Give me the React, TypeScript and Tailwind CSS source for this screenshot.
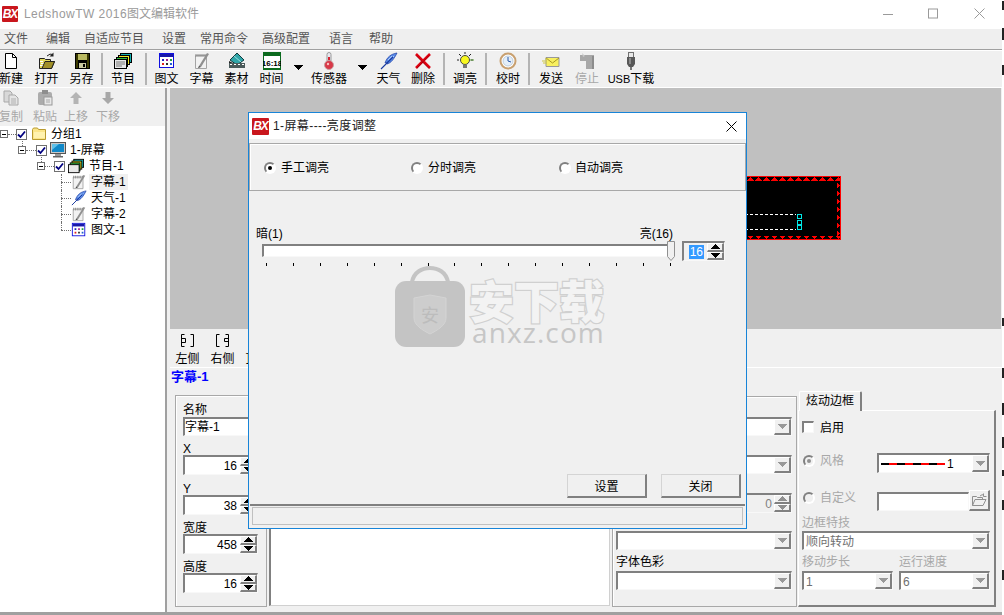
import React from "react";

const sunken = "border-t-2 border-l-2 border-b border-r border-t-[#808080] border-l-[#808080] border-b-[#f8f8f8] border-r-[#f8f8f8]";
const bevel = "bg-[#f0f0f0] border-t border-l border-b-2 border-r-2 border-t-white border-l-white border-b-[#808080] border-r-[#808080]";
const label = "h-[14px] leading-[16px]";

function Logo({ className }: { className: string }) {
  return (
    <div className={"bg-[#c9161d] text-white font-bold italic flex items-center justify-center overflow-hidden rounded-[1px] text-[12px] tracking-[-1px] " + className}>BX</div>
  );
}

function Tri({ up, color = "#000" }: { up?: boolean; color?: string }) {
  return (
    <svg width="9" height="5" viewBox="0 0 9 5" shapeRendering="crispEdges">
      <path d={up ? "M4.5 0 9 5H0z" : "M0 0h9L4.5 5z"} fill={color} />
    </svg>
  );
}

function Spin({ disabled }: { disabled?: boolean }) {
  const c = disabled ? "#909090" : "#000";
  return (
    <div className="w-[17px] h-full flex flex-col shrink-0">
      <div className={bevel + " flex-1 flex items-center justify-center"}><Tri up color={c} /></div>
      <div className={bevel + " flex-1 flex items-center justify-center"}><Tri color={c} /></div>
    </div>
  );
}

function NumBox({ value }: { value: string }) {
  return (
    <div className={sunken + " bg-white h-[20px] w-[75px] flex items-stretch"}>
      <div className="flex-1 text-right pr-[3px] leading-[18px]">{value}</div>
      <Spin />
    </div>
  );
}

function Combo({ text, className = "", gray }: { text?: React.ReactNode; className?: string; gray?: boolean }) {
  return (
    <div className={sunken + " bg-white flex items-stretch h-[19px] " + className}>
      <div className={"flex-1 pl-[2px] leading-[18px] overflow-hidden " + (gray ? "text-[#707070]" : "")}>{text}</div>
      <div className={bevel + " w-[17px] flex items-center justify-center"}><Tri color="#999999" /></div>
    </div>
  );
}

function Radio({ checked, disabled }: { checked?: boolean; disabled?: boolean }) {
  return (
    <div className={"w-[12px] h-[12px] rounded-full border-2 border-t-[#808080] border-l-[#808080] border-b-white border-r-white flex items-center justify-center shrink-0 " + (disabled ? "bg-[#f0f0f0]" : "bg-white")}>
      {checked && <div className={"w-[4px] h-[4px] rounded-full " + (disabled ? "bg-[#909090]" : "bg-black")} />}
    </div>
  );
}

/* ---------- toolbar icons ---------- */
const S = ({ children }: { children: React.ReactNode }) => (
  <svg width="18" height="18" viewBox="0 0 18 18">{children}</svg>
);
const INew = () => <S><path d="M3.5 1.5h7l4 4v11h-11z" fill="#fff" stroke="#000" /><path d="M10.5 1.5v4h4" fill="none" stroke="#000" /></S>;
const IOpen = () => <S><path d="M1.5 6.5h5l1 1h5v2h4l-3 7H1.5z" fill="#e4dc60" stroke="#222" /><path d="M2 9h3v1H2zm1 2h3v1H3zM2 13h3v1H2z" fill="#fff" /><path d="M4 16.5l3-7h9.5l-3 7z" fill="#a09028" stroke="#222" /><path d="M9 4q3-3 6-1.500" fill="none" stroke="#222" /><path d="M15.500 0.500v4h-4z" fill="#222" /></S>;
const ISave = () => <S><rect x="2" y="1" width="15" height="16" fill="#000" /><rect x="5" y="2" width="9" height="6" fill="#b8b860" /><rect x="3" y="2" width="2" height="14" fill="#3a3a00" /><rect x="14" y="2" width="2" height="14" fill="#3a3a00" /><rect x="6" y="11" width="7" height="5" fill="#c8c8a0" /><rect x="10" y="12" width="2" height="3" fill="#000" /></S>;
const IProg = () => <S><rect x="6.500" y="1.500" width="11" height="9" fill="#18b0b0" stroke="#000" /><rect x="4.500" y="3.500" width="11" height="9" fill="#f0e820" stroke="#000" /><rect x="2.500" y="5.500" width="11" height="9" fill="#30c040" stroke="#000" /><rect x="0.500" y="7.500" width="12" height="9" fill="#e8e8e8" stroke="#000" /><path d="M2 10h9M2 12h9M2 14h6" stroke="#777" /></S>;
const IPic = () => <S><rect x="1.500" y="1.500" width="14" height="14" fill="#fff" stroke="#1010e0" /><rect x="2" y="2" width="13" height="3" fill="#1818a8" /><path d="M4 7h2v2H4z" fill="#2020c0" /><path d="M8 7h2v2H8z" fill="#a02090" /><path d="M12 7h2v2h-2z" fill="#20a040" /><path d="M4 11h2v2H4z" fill="#e02020" /><path d="M8 11h2v2H8z" fill="#303030" /><path d="M12 11h2v2h-2z" fill="#2060d0" /></S>;
const INote = () => <S><path d="M2.500 3.500h11v13h-11z" fill="#f2f2f2" stroke="#a4a4a4" /><path d="M3 2v3M5 2v3M7 2v3M9 2v3M11 2v3M13 2v3" stroke="#888" /><path d="M6 14L14 1l2 1-8 13z" fill="#909090" /><path d="M6 14l2 1-3 1z" fill="#333" /></S>;
const IMat = () => <S><path d="M9 1l7 7-7 5-7-5z" fill="#2fa5a8" stroke="#10393c" /><path d="M6 4l7 6" stroke="#9ce0e0" /><path d="M1 11h16v5H1z" fill="#4b5a5a" /><path d="M2 12h2v1H2zm4 0h2v1H6zm4 0h2v1h-2zm4 0h2v1h-2z" fill="#fff" /><path d="M1 9l4 2H1z" fill="#222" /></S>;
const ITime = () => <S><rect x="0" y="0" width="18" height="18" fill="#0b6a1e" /><rect x="1" y="4" width="16" height="12" fill="#fff" /><text x="9" y="13.500" textAnchor="middle" fontSize="8" fontWeight="700" fontFamily="Liberation Sans" fill="#000">16:18</text></S>;
const ITherm = () => <S><rect x="7" y="0.500" width="4" height="10" rx="2" fill="#e8e8f0" stroke="#999" /><rect x="8" y="5" width="2" height="6" fill="#d82030" /><circle cx="9" cy="13" r="4.500" fill="#d83848" stroke="#c8a0a0" /><circle cx="8" cy="12" r="1.200" fill="#f8c0c0" /></S>;
const IFeather = () => <S><path d="M17 1C11 2 7 5 5 11l3-1-1 2c4-1 7-5 10-11z" fill="#5a8ce8" stroke="#1a3aa0" strokeWidth="0.700" /><path d="M12 4l-4 4M14 4l-3 3" stroke="#d8e8ff" strokeWidth="0.700" /><path d="M13 5L1 17" stroke="#1a3aa0" strokeWidth="1.100" /></S>;
const IDel = () => <S><path d="M2 2l14 14M16 2L2 16" stroke="#e00010" strokeWidth="2.600" /><path d="M2 3.500l13 13M15 3.500L3 16" stroke="#700008" strokeWidth="0.500" /></S>;
const IBulb = () => <S><circle cx="9" cy="8" r="4.500" fill="#f8f820" stroke="#444" /><rect x="7" y="12.500" width="4" height="3.500" fill="#777" /><path d="M9 0v2M1 8h2M15 8h2M3 2l2 2M15 2l-2 2" stroke="#222" /><path d="M14 8h4" stroke="#60a040" /></S>;
const IClock = () => <S><circle cx="9" cy="9" r="7.500" fill="#fff" stroke="#c8a070" strokeWidth="2" /><circle cx="9" cy="9" r="5" fill="#e4eef8" stroke="#90a8c0" strokeWidth="0.500" /><path d="M9 5v4l3 1" fill="none" stroke="#2858a8" /></S>;
const IMail = () => <S><path d="M4 5.500h13v9H4z" fill="#f8f060" stroke="#999" /><path d="M4 6l6.500 5L17 6" fill="none" stroke="#a89820" /><path d="M0 9h5M1 11h4M3 7h3" stroke="#d0c840" /></S>;
const IStop = () => <S><path d="M2 3h14v14H8V9H2z" fill="#a8a8a8" /><path d="M4 1l3 3-2 1z" fill="#c8c8c8" /><path d="M14 4h2v13h-2z" fill="#8c8c8c" /></S>;
const IUsb = () => <S><rect x="6.500" y="0.500" width="5" height="5" fill="#e8e8e8" stroke="#707070" /><path d="M5 5h8v7l-2 3H7l-2-3z" fill="#585858" /><path d="M7 6h2v6H7z" fill="#8a8a8a" /><rect x="8" y="15" width="2" height="3" fill="#777" /></S>;

function TB({ label: t, icon, w, disabled }: { label: React.ReactNode; icon: React.ReactNode; w: string; disabled?: boolean }) {
  return (
    <div className={"flex flex-col items-center shrink-0 pt-[1px] " + w}>
      <div className="h-[18px] flex items-center justify-center">{icon}</div>
      <div className={"whitespace-nowrap h-[14px] leading-[16px] mt-[1px] " + (disabled ? "text-[#a8a8a8]" : "")}>{t}</div>
    </div>
  );
}
const Sep = ({ m }: { m: string }) => <div className={"w-[2px] h-[32px] bg-[#b4b4b4] shrink-0 mt-[2px] " + m} />;
const Arrow = ({ w }: { w: string }) => <div className={"flex items-start justify-center pt-[14px] shrink-0 " + w}><Tri /></div>;

/* ---------- small gray tools ---------- */
const ICopy = () => <svg width="16" height="16" viewBox="0 0 16 16"><path d="M1 1h6l2 2v9H1z" fill="#d8d8d8" stroke="#a8a8a8" /><path d="M6 5h6l3 3v7H6z" fill="#e4e4e4" stroke="#a8a8a8" /><path d="M8 9h5M8 11h5M8 13h5" stroke="#b0b0b0" /></svg>;
const IPaste = () => <svg width="16" height="16" viewBox="0 0 16 16"><rect x="1" y="2" width="14" height="13" rx="2" fill="#acacac" /><rect x="5" y="0" width="6" height="4" fill="#8e8e8e" /><rect x="7" y="7" width="8" height="8" fill="#e8e8e8" stroke="#999" /><path d="M9 10h4M9 12h4" stroke="#aaa" /></svg>;
const IUp = () => <svg width="14" height="14" viewBox="0 0 14 14"><path d="M7 1l6 6H9.500v6h-5V7H1z" fill="#b4b4b4" /></svg>;
const IDown = () => <svg width="14" height="14" viewBox="0 0 14 14"><path d="M7 13L1 7h3.500V1h5v6H13z" fill="#a8a8a8" /></svg>;

function SmallTool({ label: t, icon, w }: { label: string; icon: React.ReactNode; w: string }) {
  return (
    <div className={"flex flex-col items-center shrink-0 " + w}>
      <div className="h-[18px] flex items-center justify-center">{icon}</div>
      <div className="text-[#a8a8a8] h-[14px] leading-[16px] mt-[2px] whitespace-nowrap">{t}</div>
    </div>
  );
}

/* ---------- tree ---------- */
const Exp = () => (
  <div className="w-[8px] h-[8px] border border-[#707070] bg-white flex items-center justify-center shrink-0">
    <div className="w-[4px] h-[1px] bg-black" />
  </div>
);
const Chk = () => (
  <div className="w-[11px] h-[11px] border border-[#707070] bg-white flex items-center justify-center shrink-0">
    <svg width="9" height="9" viewBox="0 0 9 9"><path d="M1 4.500l2.500 2.500L8 1.500" fill="none" stroke="#000080" strokeWidth="1.800" /></svg>
  </div>
);
const HDot = ({ w }: { w: string }) => <div className={"border-t border-dotted border-[#707070] shrink-0 " + w} />;
const VUp = ({ left }: { left: string }) => <div className={"absolute top-[-3px] h-[7px] border-l border-dotted border-[#707070] " + left} />;

const IFolder = () => <svg width="15" height="14" viewBox="0 0 15 14"><path d="M0.500 2.500l1-1.500h4l1 1.500h7v10h-13z" fill="#fbe58a" stroke="#b89a30" /><path d="M2 5h11v6H2z" fill="#fff2b0" /></svg>;
const IScreen = () => <svg width="16" height="16" viewBox="0 0 16 16"><rect x="0.500" y="0.500" width="15" height="11" fill="#c8c8c8" stroke="#555" /><rect x="2" y="2" width="12" height="8" fill="#1088c8" /><path d="M2 2h7L2 8z" fill="#60c0e8" /><path d="M5 12h6v2H5z" fill="#999" /><path d="M3 14h10v1.500H3z" fill="#666" /></svg>;

function Leaf({ label: t, icon, sel, last }: { label: string; icon: React.ReactNode; sel?: boolean; last?: boolean }) {
  return (
    <div className="relative h-[16px] flex items-center pl-[61px]">
      <div className={"absolute left-[61px] top-0 border-l border-dotted border-[#707070] " + (last ? "h-[8px]" : "h-[16px]")} />
      <HDot w="w-[10px]" />
      <div className="w-[16px] h-[16px] flex items-center justify-center shrink-0 overflow-hidden">{icon}</div>
      <div className={"ml-[2px] px-[2px] h-[16px] leading-[17px] " + (sel ? "bg-[#f0f0f0]" : "")}>{t}</div>
    </div>
  );
}

function Tree() {
  return (
    <div className="flex-1 bg-white">
      <div className="relative h-[16px] flex items-center">
        <Exp /><HDot w="w-[8px]" /><Chk />
        <div className="ml-[5px]"><IFolder /></div>
        <div className="ml-[4px]">分组1</div>
      </div>
      <div className="relative h-[16px] flex items-center pl-[18px]">
        <VUp left="left-[22px]" />
        <Exp /><HDot w="w-[10px]" /><Chk />
        <div className="ml-[3px]"><IScreen /></div>
        <div className="ml-[4px]">1-屏幕</div>
      </div>
      <div className="relative h-[16px] flex items-center pl-[37px]">
        <VUp left="left-[41px]" />
        <Exp /><HDot w="w-[9px]" /><Chk />
        <div className="ml-[3px] flex"><svg width="16" height="16" viewBox="0 0 18 18"><rect x="6.500" y="1.500" width="11" height="9" fill="#18b0b0" stroke="#000" /><rect x="4.500" y="3.500" width="11" height="9" fill="#f0e820" stroke="#000" /><rect x="2.500" y="5.500" width="11" height="9" fill="#30c040" stroke="#000" /><rect x="0.500" y="7.500" width="12" height="9" fill="#e8e8e8" stroke="#000" /></svg></div>
        <div className="ml-[5px]">节目-1</div>
      </div>
      <Leaf label="字幕-1" icon={<INote />} sel />
      <Leaf label="天气-1" icon={<IFeather />} />
      <Leaf label="字幕-2" icon={<INote />} />
      <Leaf label="图文-1" icon={<IPic />} last />
    </div>
  );
}

/* ---------- LED canvas ---------- */
function Led() {
  const tops = Array.from({ length: 14 }, (_, i) => i);
  const sides = Array.from({ length: 8 }, (_, i) => i);
  return (
    <svg width="341" height="64" viewBox="0 0 341 64" shapeRendering="crispEdges">
      <rect width="341" height="64" fill="#000" />
      <rect x="0" y="0" width="341" height="1" fill="#f00" />
      <rect x="0" y="63" width="341" height="1" fill="#f00" />
      <rect x="340" y="0" width="1" height="64" fill="#f00" />
      {tops.map((i) => <path key={i} d={`M${247 + i * 8} 4.500 l3.500 -4 l3.500 4z`} fill="#f00" />)}
      {tops.map((i) => <path key={"b" + i} d={`M${247 + i * 8} 59.500 l3.500 4 l3.500 -4z`} fill="#f00" />)}
      {sides.map((i) => <path key={"s" + i} d={`M336.500 ${6 + i * 8} l4 3.500 l-4 3.500z`} fill="#f00" />)}
      <path d="M0 38.500H296M0 53.500H296" stroke="#fff" strokeDasharray="3 2" fill="none" />
      <rect x="297.500" y="38.500" width="4" height="4" fill="none" stroke="#00e8e8" />
      <rect x="297.500" y="44.500" width="4" height="4" fill="none" stroke="#00e8e8" />
      <rect x="297.500" y="49.500" width="4" height="4" fill="none" stroke="#00e8e8" />
    </svg>
  );
}

const IEdgeL = () => <svg width="17" height="15" viewBox="0 0 17 15" fill="none" stroke="#000"><path d="M5.500 1.500h-3v12h3M11.500 1.500h3v12h-3" /><path d="M2.500 5.500h4v4h-4" /></svg>;
const IEdgeR = () => <svg width="17" height="15" viewBox="0 0 17 15" fill="none" stroke="#000"><path d="M5.500 1.500h-3v12h3M11.500 1.500h3v12h-3" /><path d="M14.500 5.500h-4v3h4" /></svg>;

/* ---------- bottom ---------- */
function PropGroup() {
  return (
    <div className="w-[92px] h-[212px] border border-[#a8a8a8] shadow-[inset_1px_1px_0_#fff] pl-[7px] pt-[6px] shrink-0">
      <div className={label}>名称</div>
      <div className={sunken + " bg-white h-[19px] w-[75px] mt-[1px] leading-[17px]"}>字幕-1</div>
      <div className={label + " mt-[5px]"}>X</div>
      <NumBox value="16" />
      <div className={label + " mt-[6px]"}>Y</div>
      <NumBox value="38" />
      <div className={label + " mt-[5px]"}>宽度</div>
      <NumBox value="458" />
      <div className={label + " mt-[5px]"}>高度</div>
      <NumBox value="16" />
    </div>
  );
}

function FontGroup() {
  return (
    <div className="w-[185px] h-[211px] mt-[1px] border border-[#a8a8a8] shadow-[inset_1px_1px_0_#fff] pl-[3px] pt-[20px] shrink-0">
      <Combo className="w-[176px]" />
      <Combo className="w-[176px] mt-[19px]" />
      <div className={sunken + " w-[176px] h-[20px] mt-[19px] flex items-stretch bg-[#f0f0f0]"}>
        <div className="flex-1 text-right pr-[2px] text-[#808080] leading-[18px]">0</div>
        <Spin disabled />
      </div>
      <Combo className="w-[176px] mt-[18px]" />
      <div className={label + " mt-[4px]"}>字体色彩</div>
      <Combo className="w-[176px] mt-[3px]" />
    </div>
  );
}

function BorderTab() {
  return (
    <div className="w-[198px] h-[216px] -mt-[4px] ml-[1px] flex flex-col shrink-0">
      <div className="ml-[1px] w-[63px] h-[20px] -mb-[1px] z-10 bg-[#f0f0f0] border-t border-l border-white border-r-2 border-r-[#808080] rounded-t-[2px] text-center leading-[19px]">炫动边框</div>
      <div className="flex-1 border-t border-l border-white border-r-2 border-b-2 border-r-[#808080] border-b-[#808080] pl-[3px] text-[#a8a8a8]">
        <div className="mt-[9px] h-[14px] flex items-center text-black">
          <div className={sunken + " w-[12px] h-[12px] bg-white"} />
          <div className="ml-[6px] h-[14px] leading-[16px]">启用</div>
        </div>
        <div className="mt-[19px] h-[20px] flex items-center">
          <div className="w-[75px] flex items-center pl-[1px] mb-[4px]"><Radio checked disabled /><span className="ml-[5px]">风格</span></div>
          <Combo className="w-[113px] h-[20px]" text={
            <span className="flex items-center h-full text-black">
              <svg width="64" height="2" viewBox="0 0 64 2" shapeRendering="crispEdges">
                <path d="M0 1h64" stroke="#000" strokeWidth="2" />
                <path d="M8 1h8M24 1h8M40 1h8M56 1h8" stroke="#f00" strokeWidth="2" />
              </svg>
              <span className="ml-[2px]">1</span>
            </span>
          } />
        </div>
        <div className="mt-[17px] h-[21px] flex items-center">
          <div className="w-[75px] flex items-center pl-[1px] mb-[5px]"><Radio disabled /><span className="ml-[5px]">自定义</span></div>
          <div className={sunken + " w-[92px] h-[19px] bg-white mt-[2px]"} />
          <div className={bevel + " w-[21px] h-[21px] flex items-center justify-center"}>
            <svg width="16" height="14" viewBox="0 0 16 14" fill="none" stroke="#909090"><path d="M1.500 12.500v-9h4l1 1h5v2" /><path d="M1.500 12.500l2.500-6h11l-3 6z" /><path d="M9 3q2-2 4-1" /><path d="M12.500 0.500v3h3" /></svg>
          </div>
        </div>
        <div className={label + " mt-[4px]"}>边框特技</div>
        <Combo className="w-[188px] mt-[2px]" gray text="顺向转动" />
        <div className="flex mt-[4px] h-[14px] leading-[16px]">
          <div className="w-[97px]">移动步长</div>
          <div>运行速度</div>
        </div>
        <div className="flex mt-[3px] gap-[6px]">
          <Combo className="w-[91px]" gray text="1" />
          <Combo className="w-[91px]" gray text="6" />
        </div>
      </div>
    </div>
  );
}

/* ---------- dialog ---------- */
function Dialog() {
  const ticks = Array.from({ length: 16 }, (_, i) => i);
  const btn = "w-[80px] h-[24px] pt-[2px] bg-[#f0f0f0] border-t border-l border-b-2 border-r-2 border-t-[#d4d4d4] border-l-[#d4d4d4] border-b-[#808080] border-r-[#808080] flex items-center justify-center";
  return (
    <div className="absolute left-[248px] top-[112px] w-[499px] h-[417px] border border-[#1784d8] bg-[#f0f0f0] flex flex-col">
      <div className="h-[26px] bg-white flex items-center shrink-0 pl-[3px]">
        <Logo className="w-[17px] h-[17px]" />
        <div className="ml-[4px] text-[#222] tracking-[0.4px]">1-屏幕----亮度调整</div>
        <div className="ml-auto mr-[9px]">
          <svg width="11" height="11" viewBox="0 0 11 11" stroke="#000" fill="none"><path d="M0.500 0.500l10 10M10.500 0.500l-10 10" /></svg>
        </div>
      </div>
      <div className="mt-[4px] h-[48px] pt-[2px] border border-[#a8a8a8] shadow-[inset_1px_1px_0_#fff] flex items-center pl-[14px] shrink-0">
        <div className="w-[147px] flex items-center"><Radio checked /><span className="ml-[5px]">手工调亮</span></div>
        <div className="w-[148px] flex items-center"><Radio /><span className="ml-[5px]">分时调亮</span></div>
        <div className="flex items-center"><Radio /><span className="ml-[4px]">自动调亮</span></div>
      </div>
      <div className="mt-[35px] pl-[7px] w-[424px] flex justify-between h-[14px] leading-[16px] shrink-0">
        <span>暗(1)</span><span>亮(16)</span>
      </div>
      <div className="relative h-[20px] mt-[1px] flex items-center shrink-0 pl-[13px]">
        <div className={sunken + " w-[410px] h-[13px] bg-white -mt-[2px]"} />
        <svg width="9" height="21" viewBox="0 0 9 21" className="absolute left-[418px] top-[0px]">
          <path d="M0.500 0.500h7v15l-3.500 4-3.500-4z" fill="#f0f0f0" stroke="#909090" />
        </svg>
        <div className={sunken + " ml-[10px] w-[43px] h-[20px] flex items-stretch bg-[#f0f0f0]"}>
          <div className="flex-1 flex items-center justify-end pr-[3px]"><span className="bg-[#3399ff] text-white px-[1px] leading-[14px]">16</span></div>
          <Spin />
        </div>
      </div>
      <div className="mt-[2px] ml-[17px] w-[405px] h-[3px] flex justify-between shrink-0">
        {ticks.map((t) => <div key={t} className="w-[1px] h-[3px] bg-black" />)}
      </div>
      <div className="mt-auto flex justify-end pr-[5px] gap-[14px] shrink-0">
        <div className={btn}>设置</div>
        <div className={btn}>关闭</div>
      </div>
      <div className="mt-[6px] mx-[1px] h-[22px] border-t-2 border-[#808080] px-[2px] pt-[1px] shrink-0">
        <div className="h-[18px] border border-[#c0c0c0]" />
      </div>
      <div className="h-[2px] shrink-0" />

      {/* watermark lying over the dialog */}
      <div className="absolute left-[145px] top-[153px] flex pointer-events-none">
        <svg width="72" height="81" viewBox="0 0 72 81">
          <path d="M18 16C20 6 28 2 36 2s16 4 18 14" fill="none" stroke="#c4c4c4" strokeWidth="4" />
          <rect x="1" y="15" width="70" height="66" rx="11" fill="#c4c4c4" />
          <path d="M20 32l16-3 16 3v20c0 7-8 12-16 16-8-4-16-9-16-16z" fill="#cdcdcd" stroke="#d4d4d4" />
          <text x="36" y="56" textAnchor="middle" fontSize="18" fontFamily="Noto Sans CJK SC" fill="#bcbcbc">安</text>
        </svg>
        <div className="ml-[3px] mt-[7px] flex flex-col">
          <div className="text-[45px] leading-[54px] h-[45px] font-['Noto_Sans_CJK_SC',sans-serif] font-black text-[#f3f3f3] [-webkit-text-stroke:2.5px_#d0d0d0] [paint-order:stroke_fill] whitespace-nowrap">安下载</div>
          <div className="text-[28px] leading-[28px] font-['Open_Sans',sans-serif] text-[#c6c6c6] tracking-[1.1px] ml-[3px]">anxz.com</div>
        </div>
      </div>
    </div>
  );
}

export default function App() {
  const menu: [string, string][] = [
    ["文件", "ml-[4px]"], ["编辑", "ml-[18px]"], ["自适应节目", "ml-[14px]"], ["设置", "ml-[18px]"],
    ["常用命令", "ml-[14px]"], ["高级配置", "ml-[14px]"], ["语言", "ml-[19px]"], ["帮助", "ml-[16px]"],
  ];
  const marks = ["mt-[1px] h-[9px]", "mt-[18px] h-[12px]", "mt-[25px] h-[10px]", "mt-[243px] h-[8px]", "mt-[42px] h-[10px]", "mt-[25px] h-[12px]", "mt-[22px] h-[11px]", "mt-[22px] h-[6px]", "mt-[24px] h-[10px]", "mt-[60px] h-[10px]"];
  return (
    <div className="relative w-[1004px] h-[615px] overflow-hidden bg-white flex text-[12px] leading-[14px] text-black font-['Liberation_Sans','Noto_Sans_CJK_SC',sans-serif]">
      <div className="w-[1002px] h-full flex flex-col shrink-0">
        {/* title bar */}
        <div className="h-[29px] flex items-center shrink-0 pl-[2px] pb-[2px]">
          <Logo className="w-[16px] h-[16px]" />
          <div className="ml-[6px] text-[#9a9a9a]"><span className="tracking-[0.45px]">LedshowTW 2016</span>图文编辑软件</div>
          <div className="ml-auto flex items-center">
            <svg width="45" height="12" viewBox="0 0 45 12" stroke="#9a9a9a" fill="none"><path d="M0 6.500h10" /></svg>
            <svg width="46" height="12" viewBox="0 0 46 12" stroke="#9a9a9a" fill="none"><rect x="0.500" y="1" width="9" height="9" /></svg>
            <svg width="28" height="12" viewBox="0 0 28 12" stroke="#9a9a9a" fill="none"><path d="M0.500 0.500l10 10M10.500 0.500l-10 10" /></svg>
          </div>
        </div>
        {/* menu */}
        <div className="h-[21px] bg-[#efefef] border-b border-[#a0a0a0] flex items-center shrink-0 text-[#555]">
          {menu.map(([t, m]) => <div key={t} className={m}>{t}</div>)}
        </div>
        {/* toolbar */}
        <div className="h-[38px] bg-[#f0f0f0] border-t border-b border-white flex shrink-0 -ml-[7px] pr-0">
          <TB label="新建" icon={<INew />} w="w-[36px]" />
          <TB label="打开" icon={<IOpen />} w="w-[35px]" />
          <TB label="另存" icon={<ISave />} w="w-[35px]" />
          <Sep m="ml-[2px]" />
          <TB label="节目" icon={<IProg />} w="w-[36px] ml-[2px]" />
          <Sep m="ml-[4px]" />
          <TB label="图文" icon={<IPic />} w="w-[35px] ml-[2px]" />
          <TB label="字幕" icon={<INote />} w="w-[35px]" />
          <TB label="素材" icon={<IMat />} w="w-[35px]" />
          <TB label="时间" icon={<ITime />} w="w-[35px]" />
          <Arrow w="w-[18px]" />
          <TB label="传感器" icon={<ITherm />} w="w-[42px] ml-[1px]" />
          <Arrow w="w-[18px] ml-[3px]" />
          <TB label="天气" icon={<IFeather />} w="w-[35px]" />
          <TB label="删除" icon={<IDel />} w="w-[34px]" />
          <Sep m="ml-[3px]" />
          <TB label="调亮" icon={<IBulb />} w="w-[38px] ml-[1px]" />
          <Sep m="ml-[1px]" />
          <TB label="校时" icon={<IClock />} w="w-[38px] ml-[2px]" />
          <Sep m="ml-[1px]" />
          <TB label="发送" icon={<IMail />} w="w-[38px] ml-[2px]" />
          <TB label="停止" icon={<IStop />} w="w-[34px]" disabled />
          <TB label={<><span className="text-[11px]">USB</span>下载</>} icon={<IUsb />} w="w-[54px]" />
        </div>
        {/* main */}
        <div className="flex-1 flex min-h-0">
          <div className="w-[167px] border-r-2 border-[#a0a0a0] flex flex-col shrink-0">
            <div className="h-[38px] bg-[#f0f0f0] flex shrink-0 pt-[1px] -ml-[7px]">
              <SmallTool label="复制" icon={<ICopy />} w="w-[36px]" />
              <SmallTool label="粘贴" icon={<IPaste />} w="w-[32px]" />
              <SmallTool label="上移" icon={<IUp />} w="w-[30px]" />
              <SmallTool label="下移" icon={<IDown />} w="w-[32px] ml-[1px]" />
            </div>
            <Tree />
          </div>
          <div className="flex-1 flex flex-col bg-[#f0f0f0] pl-[3px] min-w-0">
            <div className="relative h-[241px] bg-[#c0c0c0] shrink-0 mr-[1px]">
              <div className="absolute left-[330px] top-[88px]"><Led /></div>
            </div>
            <div className="h-[39px] border-b border-white flex shrink-0 pt-[4px]">
              {[["左侧", <IEdgeL key="l" />], ["右侧", <IEdgeR key="r" />], ["顶端", <IEdgeL key="t" />]].map(([t, ic]) => (
                <div key={t as string} className="w-[35px] flex flex-col items-center">
                  <div className="h-[16px]">{ic}</div>
                  <div className="h-[14px] leading-[16px] mt-[2px]">{t}</div>
                </div>
              ))}
            </div>
            <div className="h-[27px] pl-[1px] pt-[1px] text-[13px] font-bold text-[#0000ff] leading-[15px] shrink-0">字幕-1</div>
            <div className="flex pl-[5px] h-[212px] shrink-0">
              <PropGroup />
              <div className="ml-[2px] w-[341px] h-[211px] border-l-2 border-t-2 border-b border-r border-l-[#808080] border-t-[#808080] border-b-[#d0d0d0] border-r-[#d0d0d0] bg-white shrink-0" />
              <div className="w-[2px] shrink-0" />
              <FontGroup />
              <BorderTab />
            </div>
          </div>
        </div>
        <div className="h-[3px] bg-[#a0a0a0] shrink-0" />
      </div>
      {/* neighbouring window's edge */}
      <div className="w-[2px] flex flex-col">
        {marks.map((m) => <div key={m} className={"w-[2px] bg-[#222] " + m} />)}
      </div>
      <Dialog />
    </div>
  );
}
